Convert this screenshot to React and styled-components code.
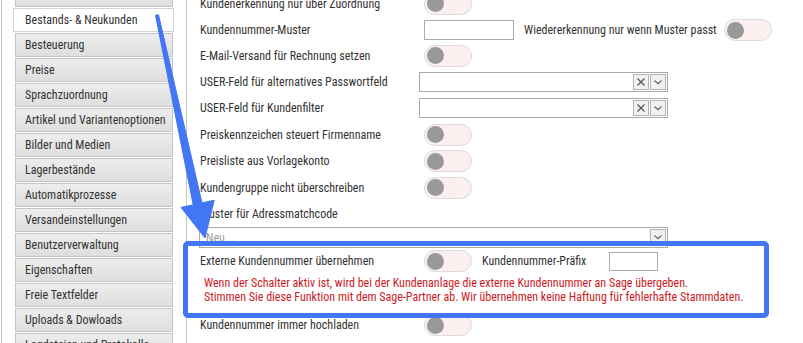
import React from 'react';
import styled, { createGlobalStyle } from 'styled-components';

const GlobalStyle = createGlobalStyle`
  html, body {
    margin: 0;
    padding: 0;
    background: #fff;
    overflow: hidden;
  }
  body {
    font-family: "Roboto Condensed", Roboto, "Liberation Sans", sans-serif;
    font-size: 12px;
    color: #333;
  }
`;

const Page = styled.div`
  position: relative;
  width: 803px;
  height: 343px;
  overflow: hidden;
`;

const Frame = styled.div`
  display: flex;
  align-items: flex-start;
  margin-top: -17px;
  margin-left: 1px;
  border-left: 1px solid #c8c8c8;
  min-height: 400px;
`;

const Sidebar = styled.ul`
  list-style: none;
  margin: 0 13px 0 0;
  padding: 0 0 0 13px;
  width: 158px;
  display: flex;
  flex-direction: column;
`;

const Tab = styled.li`
  box-sizing: border-box;
  height: 24px;
  margin: ${p => (p.$active ? '0 -1px 1px -2px' : '0 0 1px 0')};
  padding: 0 0 0 ${p => (p.$active ? '11px' : '9px')};
  border: 1px solid ${p => (p.$active ? '#d3d3d3' : '#c5c5c5')};
  background: ${p => (p.$active ? '#fff' : 'linear-gradient(#ededed, #dedede)')};
  color: #333;
  line-height: 22px;
  white-space: nowrap;
  overflow: hidden;
`;

const Panel = styled.div`
  flex: 1;
  border-left: 1px solid #c5c5c5;
  min-height: 400px;
  padding-top: 7px;
`;

const Row = styled.div`
  display: flex;
  align-items: ${p => (p.$top ? 'flex-start' : 'center')};
  height: ${p => p.$h || 26}px;
  padding-left: ${p => (p.$flush ? 0 : 13)}px;
`;

const Label = styled.span`
  width: ${p => p.$w || 224}px;
  flex: none;
  white-space: nowrap;
`;

const InlineLabel = styled.span`
  margin: 0 ${p => p.$gap || 7}px 0 10px;
  white-space: nowrap;
`;

const Toggle = styled.span`
  box-sizing: border-box;
  width: 48px;
  height: 22px;
  flex: none;
  border-radius: 11px;
  border: 1px solid #dcdcdc;
  background: #fbeff0;
  display: flex;
  align-items: center;
  padding-left: 2px;

  &::before {
    content: '';
    width: 17px;
    height: 17px;
    border-radius: 50%;
    background: #999;
  }
`;

const TextInput = styled.span`
  box-sizing: border-box;
  display: block;
  flex: none;
  width: ${p => p.$w}px;
  height: ${p => p.$h || 20}px;
  border: 1px solid #aaa;
  background: #fff;
`;

const Select = styled.div`
  box-sizing: border-box;
  display: flex;
  align-items: ${p => (p.$top ? 'flex-start' : 'center')};
  justify-content: flex-end;
  gap: 1px;
  flex: none;
  width: ${p => p.$w}px;
  height: ${p => p.$h || 20}px;
  margin-left: ${p => p.$ml || 0}px;
  padding: ${p => (p.$top ? '1px 1px 0' : '0 1px')};
  border: 1px solid #aaa;
  background: #fff;
  color: #999;
`;

const Placeholder = styled.span`
  flex: 1;
  padding-left: 5px;
  line-height: 19px;
  color: #999;
`;

const SelectButton = styled.span`
  box-sizing: border-box;
  width: 16px;
  height: 16px;
  display: flex;
  align-items: center;
  justify-content: center;
  border: 1px solid #b4b4b4;
  background: #f1f1f1;
`;

const Highlight = styled.div`
  box-sizing: border-box;
  width: 586px;
  margin: -6px 0 -6px -4px;
  border: 5px solid #4276f4;
  border-radius: 5px;
  padding: 2px 0 9px 12px;
  position: relative;
`;

const Warning = styled.div`
  color: #cc1a24;
  line-height: 14px;
  padding: 2px 0 0 4px;
  white-space: nowrap;
`;

const Arrow = styled.svg`
  position: absolute;
  left: 0;
  top: 0;
  pointer-events: none;
`;

const tabs = [
  'Versandarten',
  'Bestands- & Neukunden',
  'Besteuerung',
  'Preise',
  'Sprachzuordnung',
  'Artikel und Variantenoptionen',
  'Bilder und Medien',
  'Lagerbestände',
  'Automatikprozesse',
  'Versandeinstellungen',
  'Benutzerverwaltung',
  'Eigenschaften',
  'Freie Textfelder',
  'Uploads & Dowloads',
  'Logdateien und Protokolle',
];

const ClearIcon = () => (
  <svg width="10" height="10" viewBox="0 0 10 10">
    <path d="M1.5 1.5 L8.5 8.5 M8.5 1.5 L1.5 8.5" stroke="#555" strokeWidth="1.3" />
  </svg>
);

const ChevronIcon = () => (
  <svg width="10" height="10" viewBox="0 0 10 10">
    <path d="M1.5 3.5 L5 6.8 L8.5 3.5" stroke="#666" strokeWidth="1.2" fill="none" />
  </svg>
);

const UserSelect = ({ w, ml }) => (
  <Select $w={w} $ml={ml}>
    <SelectButton><ClearIcon /></SelectButton>
    <SelectButton><ChevronIcon /></SelectButton>
  </Select>
);

export default function App() {
  return (
    <Page>
      <GlobalStyle />
      <Frame>
        <Sidebar>
          {tabs.map((t, i) => (
            <Tab key={t} $active={i === 1}>{t}</Tab>
          ))}
        </Sidebar>
        <Panel>
          <Row $h={27}>
            <Label>Kundenerkennung nur über Zuordnung</Label>
            <Toggle />
          </Row>
          <Row>
            <Label>Kundennummer-Muster</Label>
            <TextInput $w={90} />
            <InlineLabel>Wiedererkennung nur wenn Muster passt</InlineLabel>
            <Toggle />
          </Row>
          <Row $h={25}>
            <Label>E-Mail-Versand für Rechnung setzen</Label>
            <Toggle />
          </Row>
          <Row $h={27}>
            <Label $w={219}>USER-Feld für alternatives Passwortfeld</Label>
            <UserSelect w={249} />
          </Row>
          <Row>
            <Label $w={219}>USER-Feld für Kundenfilter</Label>
            <UserSelect w={249} />
          </Row>
          <Row $h={27}>
            <Label>Preiskennzeichen steuert Firmenname</Label>
            <Toggle />
          </Row>
          <Row>
            <Label>Preisliste aus Vorlagekonto</Label>
            <Toggle />
          </Row>
          <Row $h={27}>
            <Label>Kundengruppe nicht überschreiben</Label>
            <Toggle />
          </Row>
          <Row $h={26}>
            <Label>Muster für Adressmatchcode</Label>
          </Row>
          <Row $h={20} $top>
            <Select $w={469} $ml={-1} $h={21} $top>
              <Placeholder>Neu...</Placeholder>
              <SelectButton><ChevronIcon /></SelectButton>
            </Select>
          </Row>
          <Highlight>
            <Row $flush>
              <Label>Externe Kundennummer übernehmen</Label>
              <Toggle />
              <InlineLabel $gap={23}>Kundennummer-Präfix</InlineLabel>
              <TextInput $w={49} $h={19} />
            </Row>
            <Warning>
              Wenn der Schalter aktiv ist, wird bei der Kundenanlage die externe Kundennummer an Sage übergeben.
              <br />
              Stimmen Sie diese Funktion mit dem Sage-Partner ab. Wir übernehmen keine Haftung für fehlerhafte Stammdaten.
            </Warning>
          </Highlight>
          <Row>
            <Label>Kundennummer immer hochladen</Label>
            <Toggle />
          </Row>
        </Panel>
      </Frame>
      <Arrow width="803" height="343" viewBox="0 0 803 343">
        <polygon
          points="158.5,14.7 202,202.9 214.2,200.2 205,238 181,207.4 193.2,204.8 155.5,15.3"
          fill="#4276f4"
          strokeLinejoin="round"
          stroke="#4276f4"
          strokeWidth="1"
        />
      </Arrow>
    </Page>
  );
}
